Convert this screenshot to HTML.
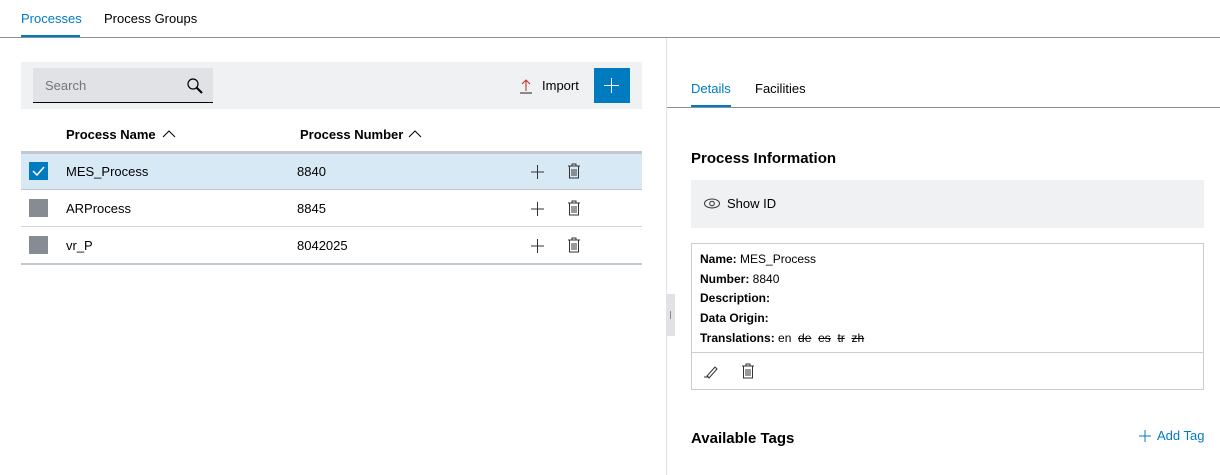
<!DOCTYPE html>
<html><head><meta charset="utf-8"><style>
*{box-sizing:border-box;margin:0;padding:0}
body{width:1220px;height:475px;overflow:hidden;background:#fff;font-family:"Liberation Sans",sans-serif;font-size:13px;color:#000;position:relative}
.a{position:absolute}
.blue{color:#007bc0}
b{font-weight:bold}
</style></head><body>
<div class="a blue" style="left:21px;top:11px;font-size:13px">Processes</div>
<div class="a" style="left:21px;top:35px;width:59px;height:2px;background:#007bc0"></div>
<div class="a" style="left:104px;top:11px">Process Groups</div>
<div class="a" style="left:0;top:37px;width:1220px;height:1px;background:#8a9097"></div>
<div class="a" style="left:666px;top:38px;width:1px;height:437px;background:#e0e2e5"></div>
<div class="a" style="left:666px;top:294px;width:9px;height:42px;background:#e0e2e5"></div>
<div class="a" style="left:670px;top:311px;width:1px;height:8px;background:#888"></div>

<div class="a" style="left:21px;top:62px;width:621px;height:47px;background:#eff1f2"></div>
<div class="a" style="left:33px;top:68px;width:180px;height:35px;background:#e0e2e5;border-bottom:1px solid #000"></div>
<div class="a" style="left:45px;top:78px;color:#71767c">Search</div>
<svg class="a" style="left:186px;top:77px" width="18" height="18" viewBox="0 0 18 18"><circle cx="7" cy="7" r="5" fill="none" stroke="#000" stroke-width="1.2"/><path d="M10.5 10.5L16 16" stroke="#000" stroke-width="2"/></svg>
<svg class="a" style="left:519px;top:78px" width="14" height="16" viewBox="0 0 14 16"><path d="M7 13V2M3 6l4-4 4 4" fill="none" stroke="#c0392b" stroke-width="1.1"/><path d="M1 15h12" stroke="#333" stroke-width="1.1"/></svg>
<div class="a" style="left:542px;top:78px">Import</div>
<div class="a" style="left:594px;top:68px;width:36px;height:35px;background:#007bc0"></div>
<div class="a" style="left:604px;top:85px;width:15px;height:1px;background:#fff"></div>
<div class="a" style="left:611px;top:78px;width:1px;height:15px;background:#fff"></div>

<div class="a" style="left:66px;top:127px"><b>Process Name</b></div>
<svg class="a" style="left:162px;top:129px" width="14" height="9"><path d="M1 8l6-6 6 6" fill="none" stroke="#000"/></svg>
<div class="a" style="left:300px;top:127px"><b>Process Number</b></div>
<svg class="a" style="left:408px;top:129px" width="14" height="9"><path d="M1 8l6-6 6 6" fill="none" stroke="#000"/></svg>
<div class="a" style="left:21px;top:151px;width:621px;height:3px;background:#c1c7cc"></div>
<div class="a" style="left:21px;top:154px;width:621px;height:35px;background:#d8e9f6"></div>
<div class="a" style="left:21px;top:189px;width:621px;height:1px;background:#c1c7cc"></div>
<div class="a" style="left:21px;top:226px;width:621px;height:1px;background:#d0d4d8"></div>
<div class="a" style="left:21px;top:263px;width:621px;height:2px;background:#c1c7cc"></div>

<div class="a" style="left:29px;top:162px;width:19px;height:18px;background:#007bc0"></div>
<svg class="a" style="left:29px;top:162px" width="19" height="18"><path d="M4 9l4 4 7-8" fill="none" stroke="#fff" stroke-width="1.5"/></svg>
<div class="a" style="left:29px;top:199px;width:19px;height:18px;background:#878c93"></div>
<div class="a" style="left:29px;top:236px;width:19px;height:18px;background:#878c93"></div>
<div class="a" style="left:66px;top:164px">MES_Process</div>
<div class="a" style="left:297px;top:164px">8840</div>
<div class="a" style="left:66px;top:201px">ARProcess</div>
<div class="a" style="left:297px;top:201px">8845</div>
<div class="a" style="left:66px;top:238px">vr_P</div>
<div class="a" style="left:297px;top:238px">8042025</div>
<svg class="a" style="left:528px;top:162px" width="60" height="100">
<g fill="none" stroke="#333" stroke-width="1">
<path d="M3 10h13M9.5 3v14M3 47h13M9.5 40v14M3 84h13M9.5 77v14"/>
<path d="M40 4h12M44 4V2h4v2M41.5 4v12h9V4M44 7v7M46 7v7M48 7v7"/>
<path d="M40 41h12M44 41v-2h4v2M41.5 41v12h9V41M44 44v7M46 44v7M48 44v7"/>
<path d="M40 78h12M44 78v-2h4v2M41.5 78v12h9V78M44 81v7M46 81v7M48 81v7"/>
</g></svg>

<div class="a blue" style="left:691px;top:81px">Details</div>
<div class="a" style="left:691px;top:105px;width:40px;height:2px;background:#007bc0"></div>
<div class="a" style="left:755px;top:81px">Facilities</div>
<div class="a" style="left:667px;top:107px;width:553px;height:1px;background:#8a9097"></div>

<div class="a" style="left:691px;top:150px;font-size:15px"><b>Process Information</b></div>
<div class="a" style="left:691px;top:180px;width:513px;height:48px;background:#eff1f2"></div>
<svg class="a" style="left:703px;top:197px" width="18" height="13"><ellipse cx="9" cy="6.5" rx="7.5" ry="4.5" fill="none" stroke="#333"/><circle cx="9" cy="6.5" r="2.3" fill="none" stroke="#333"/></svg>
<div class="a" style="left:727px;top:196px">Show ID</div>
<div class="a" style="left:691px;top:243px;width:513px;height:147px;border:1px solid #c9cdd1"></div>
<div class="a" style="left:692px;top:352px;width:511px;height:1px;background:#c9cdd1"></div>
<div class="a" style="left:700px;top:250px;line-height:19.7px;font-size:12px">
<div><b>Name:</b> MES_Process</div>
<div><b>Number:</b> 8840</div>
<div><b>Description:</b></div>
<div><b>Data Origin:</b></div>
<div><b>Translations:</b> en &nbsp;<s>de</s> &nbsp;<s>es</s> &nbsp;<s>tr</s> &nbsp;<s>zh</s></div>
</div>
<svg class="a" style="left:702px;top:362px" width="60" height="18" fill="none" stroke="#333">
<path d="M2 15h5M5 14l8-9 2 2-8 9z"/>
<path d="M40 4h12M44 4V2h4v2M41.5 4v12h9V4M44 7v7M46 7v7M48 7v7"/>
</svg>
<div class="a" style="left:691px;top:430px;font-size:15px"><b>Available Tags</b></div>
<svg class="a" style="left:1138px;top:429px" width="14" height="14"><path d="M1 7h12M7 1v12" stroke="#007bc0"/></svg>
<div class="a blue" style="left:1157px;top:428px">Add Tag</div>
</body></html>
